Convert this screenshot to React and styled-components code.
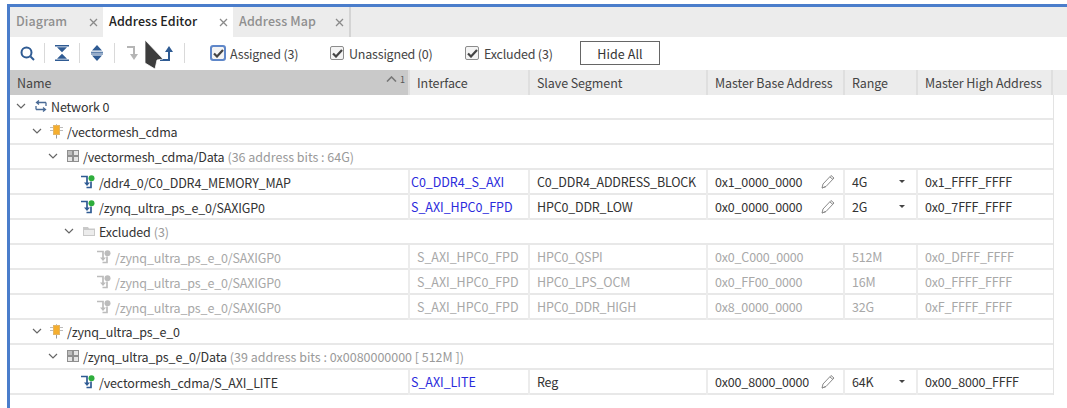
import React from "react";
import styled, { createGlobalStyle } from "styled-components";

const Global = createGlobalStyle`
  html, body { margin: 0; padding: 0; background: #fff; }
  body { font-family: "Noto Sans CJK SC", "Noto Sans", sans-serif; font-size: 12.5px; color: #333; }
`;
const Page = styled.div`
  position: relative; width: 1067px; height: 408px; overflow: hidden; padding: 4px 0 0 7px; box-sizing: border-box;
`;
const Frame = styled.div`
  height: 404px; border-top: 3px solid #4a7dcb; border-left: 3px solid #4a7dcb; box-sizing: border-box;
`;
const TabBar = styled.div`display: flex; height: 30px; background: #ececec;`;
const Tab = styled.div`
  display: flex; align-items: center; justify-content: space-between; box-sizing: border-box;
  width: ${p => p.$w}px; padding: 0 5px 3px ${p => p.$pl}px; font-weight: 500; font-size: 12.5px; letter-spacing: .1px;
  background: ${p => (p.$active ? "#fff" : "transparent")}; color: ${p => (p.$active ? "#222" : "#8f8f8f")};
  ${p => p.$sep && "border-right: 2px solid #d4d4d4;"}
`;
const Close = styled.svg`width: 9px; height: 9px; margin-top: 4px; stroke: #8a8a8a; stroke-width: 1.3; flex: none;`;
const Toolbar = styled.div`display: flex; align-items: center; height: 32px; background: #fff; box-sizing: border-box;`;
const ToolSlot = styled.div`width: ${p => p.$w}px; display: flex; justify-content: center; align-items: center; height: 20px;
  ${p => p.$sep && "border-right: 1px solid #d9d9d9;"} box-sizing: border-box;`;
const Check = styled.label`display: flex; align-items: center; gap: 5px; width: ${p => p.$w}px; color: #444; font-size: 12.5px; letter-spacing: -.2px;`;
const Box = styled.span`
  width: 14px; height: 14px; box-sizing: border-box; border: 1px solid #8c8c8c; border-radius: 2px; background: #f4f4f4; display: flex; align-items: center; justify-content: center;
  ${p => p.$focus && "outline: 2px solid #5f87c9; outline-offset: -1px; margin-left: 1px;"}
`;
const HideBtn = styled.button`
  width: 80px; height: 24px; border: 1px solid #666; background: #fff; font: inherit; font-size: 12.5px; color: #333; letter-spacing: .1px; padding: 0;
`;
const cols = "400px 120px 178px 137px 73px 135px";
const Header = styled.div`display: grid; grid-template-columns: ${cols} 14px; height: 25px; margin-top: 1px; background: #ececec;`;
const HCell = styled.div`
  display: flex; align-items: center; justify-content: space-between; box-sizing: border-box; padding: 0 4px 0 ${p => p.$pl || 7}px;
  font-size: 12.5px; color: #444; letter-spacing: -.08px; position: relative; white-space: nowrap;
  background: ${p => (p.$sorted ? "#c9c9c9" : "transparent")};
  border-right: ${p => (p.$last ? "none" : "2px solid #dfdfdf")};
`;
const Sort = styled.span`display: flex; align-items: center; gap: 3px; font-size: 9px; color: #555; margin-top: -7px; margin-right: -1px;`;
const Table = styled.div`width: 1043px; border-right: 1px solid #e3e3e3; box-sizing: content-box;`;
const Row = styled.div`
  display: grid; grid-template-columns: ${cols}; height: 25px; box-sizing: border-box; border-bottom: 2px solid #e8e8e8;
  color: ${p => (p.$dim ? "#a8a8a8" : "#333")};
`;
const Cell = styled.div`
  display: flex; align-items: center; justify-content: space-between; box-sizing: border-box; padding: 0 7px 2px ${p => (p.$link ? 1 : 7)}px; white-space: nowrap; font-size: 12.5px; letter-spacing: ${p => (p.$iface ? "-.05px" : "-.18px")};
  border-right: 2px solid #ececec; margin-bottom: -2px;
  ${p => p.$link && "color: #2b2bdc;"}
  ${p => p.$last && "border-right: none;"}
`;
const NameCell = styled.div`
  display: flex; align-items: center; padding-left: ${p => p.$indent}px; white-space: nowrap; font-size: 12.5px; letter-spacing: -.15px; padding-bottom: ${p => (p.$wide ? 3 : 1)}px; border-right: ${p => (p.$wide ? "none" : "2px solid #ececec")}; margin-bottom: -2px;
  grid-column: ${p => (p.$wide ? "1 / -1" : "auto")};
`;
const Chevron = styled.svg`width: 10px; height: 7px; fill: none; stroke: #666; stroke-width: 1.2; margin-right: 7px; flex: none;`;
const IconWrap = styled.span`display: inline-flex; width: 15px; height: 15px; margin-right: ${p => p.$mr ?? 5}px; flex: none; align-items: center; justify-content: center;`;
const Muted = styled.span`color: #9a9a9a; margin-left: 3px; letter-spacing: -.02px;`;
const DropTri = styled.span`width: 0; height: 0; border-left: 3px solid transparent; border-right: 3px solid transparent; border-top: 3px solid #444; margin-right: 4px;`;
const Cursor = styled.svg`position: absolute; left: 143px; top: 38px; width: 24px; height: 36px;`;

const X = () => <Close viewBox="0 0 9 9"><path d="M1 1l7 7M8 1L1 8" /></Close>;
const Blue = "#2f5b93";
const Search = () => <svg width="15" height="15" viewBox="0 0 15 15" fill="none" stroke={Blue} strokeWidth="2"><circle cx="6.5" cy="6.5" r="5" /><path d="M10.5 10.5l3.5 3.5" /></svg>;
const CollapseAll = () => <svg width="14" height="16" viewBox="0 0 14 16" fill={Blue}><path d="M0 0h14v1.6H0zM2 2.2h10L7 7.2zM0 14.4h14V16H0zM2 13.8h10L7 8.8z" /></svg>;
const ExpandAll = () => <svg width="12" height="16" viewBox="0 0 12 16" fill={Blue}><path d="M6 0l5 5.5H1zM6 16l-5-5.5h10zM0 6.7h12v1H0zM0 8.4h12v1H0z" /></svg>;
const ArrowDown = () => <svg width="12" height="15" viewBox="0 0 12 15" fill="#b5b5b5"><path d="M0 0h8v8h3l-4 6-4-6h3V2H0z" /></svg>;
const ArrowUp = () => <svg width="14" height="15" viewBox="0 0 14 15" fill={Blue}><path d="M0 13h8V6H5l4-6 4 6h-3v9H0z" /></svg>;
const Tick = () => <svg width="11" height="9" viewBox="0 0 11 9" fill="none" stroke="#444" strokeWidth="2.2"><path d="M1 4.5l3 3L10 1" /></svg>;
const Net = () => <svg width="12" height="12" viewBox="0 0 12 12" fill="none" stroke="#4a6b96" strokeWidth="1.3"><path d="M11 2.5H2M4 .5L1.5 2.5 4 4.5M11 2.5v3.5M1 9.5h9M8 7.5l2.5 2L8 11.5M1 9.5V6" /></svg>;
const Chip = () => <svg width="13" height="15" viewBox="0 0 13 15"><path d="M0 3.5h3M0 6.5h3M10 3.5h3M10 6.5h3M6.5 0v2" stroke="#bdbdbd" strokeWidth="1" /><rect x="3.5" y="1.5" width="6" height="9" fill="#f5ae2e" stroke="#e3b565" /><path d="M6.5 11v3.5" stroke="#999" /></svg>;
const Grid = () => <svg width="12" height="12" viewBox="0 0 12 12"><rect width="12" height="12" fill="#8f8f8f" /><path d="M1 1h4v4H1zM7 1h4v4H7zM1 7h4v4H1zM7 7h4v4H7z" fill="#e4e4e4" /><path d="M1 1h4v4H1z" fill="#bdbdbd" /></svg>;
const Folder = () => <svg width="12" height="11" viewBox="0 0 12 11"><path d="M0 1h5l1 1.5h6V10H0z" fill="#c9c9c9" /><path d="M1 4h10v5H1z" fill="#ececec" /></svg>;
const Seg = ({ dim }) => (
  <svg width="14" height="14" viewBox="0 0 14 14" fill="none">
    <path d="M0 1.5h6V8" stroke={dim ? "#bcbcbc" : Blue} strokeWidth="1.7" />
    <path d="M3 7.5h6l-3 3.5z" fill={dim ? "#bcbcbc" : Blue} />
    <path d="M10 6.5v6H5.5" stroke={dim ? "#bcbcbc" : Blue} strokeWidth="1.7" />
    <circle cx="10.5" cy="3.2" r="3" fill={dim ? "#bcbcbc" : "#2fae3d"} />
  </svg>
);
const Pencil = () => <svg width="15" height="15" viewBox="0 0 15 15" fill="none" stroke="#8a8a8a" strokeWidth="1"><path d="M1 14l1-4 8-8.5 3 2.5-8 8.5zM1 14l4-1.5M9 3l3 2.5" /></svg>;
const Chev = () => <Chevron viewBox="0 0 10 7"><path d="M1 1l4 4 4-4" /></Chevron>;

const TreeRow = ({ indent, children }) => (
  <Row><NameCell $indent={indent} $wide>{children}</NameCell></Row>
);
const Assigned = ({ path, iface, seg, base, range, high }) => (
  <Row>
    <NameCell $indent={70}><IconWrap $mr={4}><Seg /></IconWrap>{path}</NameCell>
    <Cell $link $iface>{iface}</Cell>
    <Cell>{seg}</Cell>
    <Cell>{base}<Pencil /></Cell>
    <Cell>{range}<DropTri /></Cell>
    <Cell $last>{high}</Cell>
  </Row>
);
const Excl = ({ seg, base, range, high }) => (
  <Row $dim>
    <NameCell $indent={86}><IconWrap $mr={4}><Seg dim /></IconWrap>/zynq_ultra_ps_e_0/SAXIGP0</NameCell>
    <Cell $iface>S_AXI_HPC0_FPD</Cell>
    <Cell>{seg}</Cell>
    <Cell>{base}</Cell>
    <Cell>{range}</Cell>
    <Cell $last>{high}</Cell>
  </Row>
);

export default function App() {
  return (
    <Page>
      <Global />
      <Frame>
        <TabBar>
          <Tab $w={93} $pl={6}>Diagram<X /></Tab>
          <Tab $w={130} $pl={6} $active>Address Editor<X /></Tab>
          <Tab $w={118} $pl={6} $sep>Address Map<X /></Tab>
        </TabBar>
        <Toolbar>
          <ToolSlot $w={35} $sep><Search /></ToolSlot>
          <ToolSlot $w={35} $sep><CollapseAll /></ToolSlot>
          <ToolSlot $w={35} $sep><ExpandAll /></ToolSlot>
          <ToolSlot $w={35}><ArrowDown /></ToolSlot>
          <ToolSlot $w={35} $sep><ArrowUp /></ToolSlot>
          <ToolSlot $w={25} />
          <Check $w={120}><Box $focus><Tick /></Box>Assigned (3)</Check>
          <Check $w={135}><Box><Tick /></Box>Unassigned (0)</Check>
          <Check $w={115}><Box><Tick /></Box>Excluded (3)</Check>
          <HideBtn>Hide All</HideBtn>
        </Toolbar>
        <Header>
          <HCell $sorted>Name<Sort><svg width="11" height="6" viewBox="0 0 11 6" fill="none" stroke="#777" strokeWidth="1.6"><path d="M1 5.5l4.5-4.5 4.5 4.5" /></svg>1</Sort></HCell>
          <HCell>Interface</HCell>
          <HCell>Slave Segment</HCell>
          <HCell>Master Base Address</HCell>
          <HCell>Range</HCell>
          <HCell>Master High Address</HCell>
          <HCell $last />
        </Header>
        <Table>
          <TreeRow indent={6}><Chev /><IconWrap $mr={3}><Net /></IconWrap>Network 0</TreeRow>
          <TreeRow indent={22}><Chev /><IconWrap $mr={3}><Chip /></IconWrap>/vectormesh_cdma</TreeRow>
          <TreeRow indent={38}><Chev /><IconWrap $mr={3}><Grid /></IconWrap>/vectormesh_cdma/Data<Muted>(36 address bits : 64G)</Muted></TreeRow>
          <Assigned path="/ddr4_0/C0_DDR4_MEMORY_MAP" iface="C0_DDR4_S_AXI" seg="C0_DDR4_ADDRESS_BLOCK" base="0x1_0000_0000" range="4G" high="0x1_FFFF_FFFF" />
          <Assigned path="/zynq_ultra_ps_e_0/SAXIGP0" iface="S_AXI_HPC0_FPD" seg="HPC0_DDR_LOW" base="0x0_0000_0000" range="2G" high="0x0_7FFF_FFFF" />
          <TreeRow indent={54}><Chev /><IconWrap $mr={3}><Folder /></IconWrap>Excluded<Muted>(3)</Muted></TreeRow>
          <Excl seg="HPC0_QSPI" base="0x0_C000_0000" range="512M" high="0x0_DFFF_FFFF" />
          <Excl seg="HPC0_LPS_OCM" base="0x0_FF00_0000" range="16M" high="0x0_FFFF_FFFF" />
          <Excl seg="HPC0_DDR_HIGH" base="0x8_0000_0000" range="32G" high="0xF_FFFF_FFFF" />
          <TreeRow indent={22}><Chev /><IconWrap $mr={3}><Chip /></IconWrap>/zynq_ultra_ps_e_0</TreeRow>
          <TreeRow indent={38}><Chev /><IconWrap $mr={3}><Grid /></IconWrap>/zynq_ultra_ps_e_0/Data<Muted>(39 address bits : 0x0080000000 [ 512M ])</Muted></TreeRow>
          <Assigned path="/vectormesh_cdma/S_AXI_LITE" iface="S_AXI_LITE" seg="Reg" base="0x00_8000_0000" range="64K" high="0x00_8000_FFFF" />
        </Table>
      </Frame>
      <Cursor viewBox="0 0 24 36">
        <path d="M2 2v23l10 6 2-9 6-1z" fill="#3c3c3c" stroke="#fff" strokeOpacity=".75" strokeWidth="1" />
      </Cursor>
    </Page>
  );
}
